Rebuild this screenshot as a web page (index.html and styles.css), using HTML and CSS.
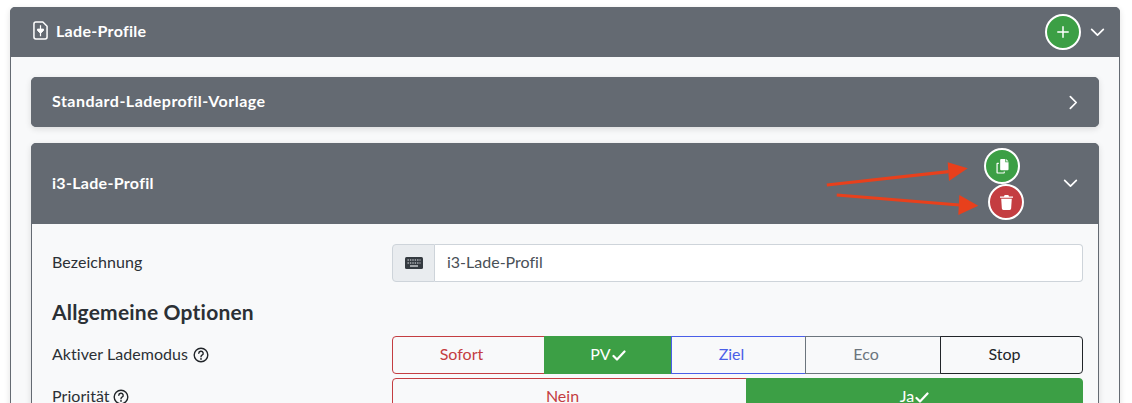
FILE: index.html
```html
<!DOCTYPE html>
<html lang="de">
<head>
<meta charset="utf-8">
<title>Lade-Profile</title>
<link rel="stylesheet" href="styles.css">
</head>
<body>
<section class="card outer">
  <header class="card-head outer-head">
    <div class="title">
      <svg class="file-icon" viewBox="0 0 16 20" width="15" height="19" fill="none" stroke="#fff" stroke-width="1.6" stroke-linejoin="round"><path d="M3 1h7.500L15 5.500V17a2 2 0 0 1-2 2H3a2 2 0 0 1-2-2V3a2 2 0 0 1 2-2z"/><path d="M4.800 8.500h6.400v1.500L8 13l-3.200-3z" fill="#fff" stroke-width="1"/><path d="M8 4.500v4M8 12.500V16" stroke-width="1.300"/></svg>
      <span class="head-text">Lade-Profile</span>
    </div>
    <div class="head-actions">
      <span class="round green"><svg viewBox="0 0 12 12" width="12" height="12" stroke="#fff" stroke-width="1.500" stroke-linecap="round"><path d="M6 .8v10.400M.8 6h10.400"/></svg></span>
      <svg class="chev" viewBox="0 0 16 10" width="15" height="9" fill="none" stroke="#fff" stroke-width="1.900" stroke-linecap="round" stroke-linejoin="round"><path d="M1.500 1.500 8 8l6.500-6.500"/></svg>
    </div>
  </header>
  <div class="outer-body">
    <div class="card closed">
      <header class="card-head closed-head">
        <span class="head-text">Standard-Ladeprofil-Vorlage</span>
        <svg class="chev-r" viewBox="0 0 10 16" width="9" height="15" fill="none" stroke="#fff" stroke-width="1.900" stroke-linecap="round" stroke-linejoin="round"><path d="M1.500 1.500 8 8l-6.500 6.500"/></svg>
      </header>
    </div>
    <div class="card profile">
      <header class="card-head profile-head">
        <span class="head-text">i3-Lade-Profil</span>
        <svg class="chev" viewBox="0 0 16 10" width="15" height="9" fill="none" stroke="#fff" stroke-width="1.900" stroke-linecap="round" stroke-linejoin="round"><path d="M1.500 1.500 8 8l6.500-6.500"/></svg>
        <span class="round green copy"><svg viewBox="0 0 14 16" width="13" height="15" fill="#fff"><path d="M5.500 0H10v3.500h3.500V11a1 1 0 0 1-1 1h-7a1 1 0 0 1-1-1V1a1 1 0 0 1 1-1z"/><path d="M11 0l2.500 2.500H11z"/><path d="M3 4H1.500a1 1 0 0 0-1 1v9.500a1 1 0 0 0 1 1h7a1 1 0 0 0 1-1V13.500H8.300v1h-6.500V5.200H3z"/></svg></span>
        <span class="round red trash"><svg viewBox="0 0 14 16" width="13" height="15" fill="#fff"><path d="M5 0h4l.7 1.500h3.800a.7.7 0 0 1 0 1.500H.5a.7.7 0 0 1 0-1.500h3.800z"/><path d="M1.300 4h11.400l-.7 10.500A1.600 1.600 0 0 1 10.400 16H3.600A1.600 1.600 0 0 1 2 14.500z"/></svg></span>
        <svg class="arrows" viewBox="0 0 160 60" width="160" height="60" fill="#e8401c"><path d="M.8 25 122.500 11.700" stroke="#e8401c" stroke-width="3.200"/><path d="M121.700 2.300 141.700 8.300 123 21z"/><path d="M10.700 35 133.300 45" stroke="#e8401c" stroke-width="3.200"/><path d="M133.300 35 152.300 45.700 132.300 55z"/></svg>
      </header>
      <div class="profile-body">
        <div class="row">
          <label class="lbl">Bezeichnung</label>
          <div class="input-group">
            <span class="addon"><svg viewBox="0 0 18 12" width="18" height="12"><rect width="18" height="12" rx="1.500" fill="#343a40"/><path d="M2.500 3h13M2.500 6h13" stroke="#e9ecef" stroke-width="1.200" stroke-dasharray="1.400 1"/><path d="M5 9h8" stroke="#e9ecef" stroke-width="1.200"/></svg></span>
            <span class="input">i3-Lade-Profil</span>
          </div>
        </div>
        <h3 class="section">Allgemeine Optionen</h3>
        <div class="row">
          <label class="lbl">Aktiver Lademodus <svg class="help" viewBox="0 0 16 16" width="16" height="16" fill="none" stroke="#212529" stroke-width="1.400"><circle cx="8" cy="8" r="6.800"/><path d="M5.800 6.300A2.200 2.100 0 1 1 9 8.200c-.7.400-1 .8-1 1.600" stroke-linecap="round"/><circle cx="8" cy="11.900" r=".9" fill="#212529" stroke="none"/></svg></label>
          <div class="btn-group modes">
            <span class="btn plain b-red">Sofort</span>
            <span class="btn b-green">PV<svg class="check" viewBox="0 0 14 11" width="14" height="11" fill="none" stroke="#fff" stroke-width="2.200" stroke-linecap="round" stroke-linejoin="round"><path d="M1.500 6 5 9.500 12.500 1.500"/></svg></span>
            <span class="btn plain b-blue">Ziel</span>
            <span class="btn plain b-grey">Eco</span>
            <span class="btn plain b-dark">Stop</span>
          </div>
        </div>
        <div class="row second">
          <label class="lbl">Priorität <svg class="help" viewBox="0 0 16 16" width="16" height="16" fill="none" stroke="#212529" stroke-width="1.400"><circle cx="8" cy="8" r="6.800"/><path d="M5.800 6.300A2.200 2.100 0 1 1 9 8.200c-.7.400-1 .8-1 1.600" stroke-linecap="round"/><circle cx="8" cy="11.900" r=".9" fill="#212529" stroke="none"/></svg></label>
          <div class="btn-group prio">
            <span class="btn plain b-red">Nein</span>
            <span class="btn b-green">Ja<svg class="check" viewBox="0 0 14 11" width="14" height="11" fill="none" stroke="#fff" stroke-width="2.200" stroke-linecap="round" stroke-linejoin="round"><path d="M1.500 6 5 9.500 12.500 1.500"/></svg></span>
          </div>
        </div>
      </div>
    </div>
  </div>
</section>
</body>
</html>
```
FILE: styles.css
```css
* { box-sizing: border-box; }
html, body { height: 403px; overflow: hidden; }
body {
  margin: 0;
  padding: 7px 12px 0 10px;
  background: #fff;
  color: #2b3035;
  font-family: "Lato", "Liberation Sans", sans-serif;
  font-size: 16px;
  line-height: 24px;
  font-variant-ligatures: none;
}
.card {
  border: 1px solid #646a72;
  border-radius: 5px;
  background: #f8f9fa;
  box-shadow: 0 2px 6px rgba(0, 0, 0, .12);
}
.card-head {
  display: flex;
  align-items: center;
  justify-content: space-between;
  background: #646a72;
  color: #fff;
  font-weight: 700;
  font-size: 16px;
  letter-spacing: .3px;
  margin: -1px;
  border-radius: 5px 5px 0 0;
}
.head-text { padding-bottom: 2px; }
.outer { min-height: 420px; }
.outer-head { height: 50px; padding: 0 15px 0 23px; }
.title { display: flex; align-items: center; gap: 8px; }
.file-icon { margin-top: -4px; }
.head-actions { display: flex; align-items: center; gap: 9px; }
.round {
  display: flex;
  align-items: center;
  justify-content: center;
  width: 36px;
  height: 36px;
  border: 2px solid #fff;
  border-radius: 50%;
}
.green { background: #3c9f45; }
.red { background: #c43d41; }
.outer-body { padding: 21px 20px 0; }
.closed { margin-bottom: 16px; }
.closed-head { height: 50px; padding: 0 21px; border-radius: 5px; letter-spacing: .48px; }
.profile-head {
  position: relative;
  height: 81px;
  padding: 0 21px;
}
.copy { position: absolute; left: 953px; top: 5px; }
.trash { position: absolute; left: 957px; top: 41px; }
.arrows { position: absolute; left: 795px; top: 17px; overflow: visible; }
.profile-body { padding: 21px 15px 0 20px; }
.row { display: flex; align-items: center; height: 38px; }
.second { margin-top: 4px; }
.lbl { width: 340px; flex: none; display: flex; align-items: center; gap: 5px; padding-bottom: 2px; letter-spacing: .05px; }
.second .lbl { gap: 3px; }
.help { margin-top: 2px; }
.input-group { flex: 1; display: flex; height: 38px; }
.addon {
  width: 43px;
  display: flex;
  align-items: center;
  justify-content: center;
  background: #e9ecef;
  border: 1px solid #ced4da;
  border-radius: 4px 0 0 4px;
}
.input {
  flex: 1;
  display: flex;
  align-items: center;
  padding: 0 0 2px 12px;
  background: #fff;
  color: #495057;
  border: 1px solid #ced4da;
  border-left: 0;
  border-radius: 0 4px 4px 0;
}
.section { margin: 18px 0 12px; font-size: 21px; letter-spacing: .2px; line-height: 24px; font-weight: 700; }
.btn-group { flex: 1; display: flex; height: 38px; }
.btn {
  display: flex;
  align-items: center;
  justify-content: center;
  padding-bottom: 2px;
  border: 1px solid;
  background: transparent;
}
.btn + .btn { margin-left: -1px; }
.plain { padding-right: 14px; }
.modes .btn:nth-child(1) { width: 153px; }
.modes .btn:nth-child(2) { width: 128px; }
.modes .btn:nth-child(3) { width: 135px; }
.modes .btn:nth-child(4) { width: 136px; }
.modes .btn:nth-child(5) { flex: 1; }
.prio .btn:first-child { width: 355px; }
.prio .btn:last-child { flex: 1; }
.b-red { color: #c43d41; border-color: #c43d41; border-radius: 4px 0 0 4px; }
.b-green { color: #fff; background: #3c9f45; border-color: #3c9f45; }
.b-blue { color: #4a5fe8; border-color: #4a5fe8; }
.b-grey { color: #6c757d; border-color: #6c757d; }
.b-dark { color: #212529; border-color: #212529; border-radius: 0 4px 4px 0; }
.prio .b-green { border-radius: 0 4px 4px 0; }
.check { margin-left: 1px; margin-top: 2px; }
```
